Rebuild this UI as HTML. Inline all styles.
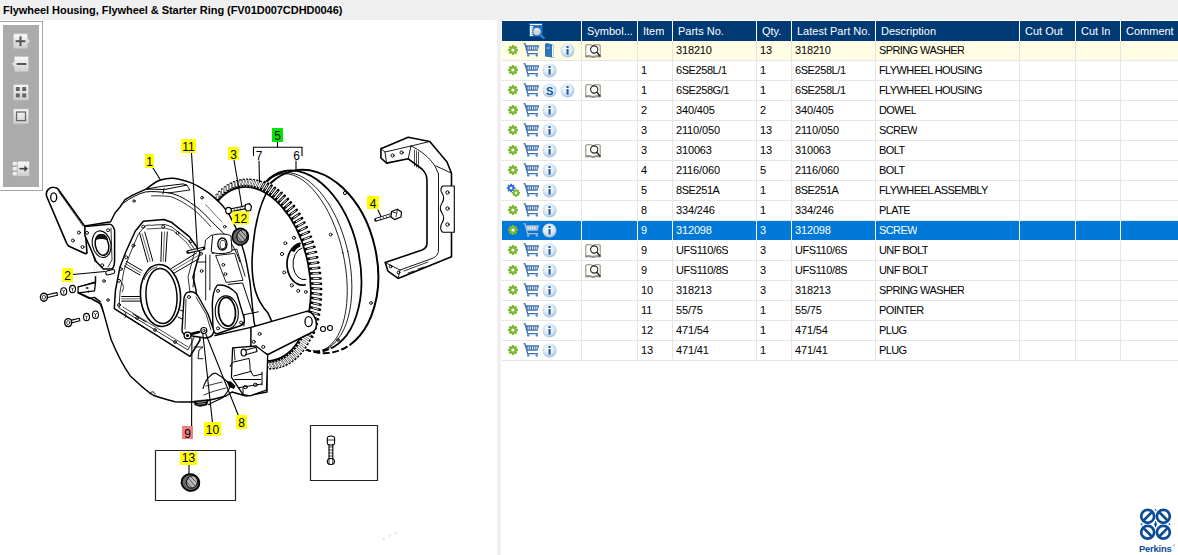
<!DOCTYPE html>
<html><head><meta charset="utf-8"><style>*{margin:0;padding:0;box-sizing:border-box}
html,body{width:1178px;height:555px;overflow:hidden;background:#f0f0f0;font-family:"Liberation Sans",sans-serif;}
#title{position:absolute;left:0;top:0;width:1178px;height:20px;font-weight:bold;font-size:11px;line-height:20px;padding-left:3px;color:#000;letter-spacing:-0.05px}
#left{position:absolute;left:0;top:20px;width:497px;height:535px;background:#fff;overflow:hidden}
#diag{position:absolute;left:0;top:-20px}
#right{position:absolute;left:501px;top:20px;width:677px;height:535px;background:#fff;overflow:hidden}
#tb{position:absolute;left:0;top:1px;width:43px;height:170px;border:1px solid #a8a8a8;border-left:none;background:#fff}
#tbi{position:absolute;left:3px;top:3px;width:36px;height:162px;background:#ababab}
.row{position:absolute;left:1px;width:677px;height:20px;font-size:11px;white-space:nowrap;color:#000}
.row div{position:absolute;top:0;height:19px;line-height:19px;overflow:hidden}
.hdr{background:#003a75;color:#fff}
.hdr div{height:20px;line-height:20px}
.sep{position:absolute;top:0;width:1px;height:20px;background:#e6e6e6}
.hdr .sep{background:#fff}
.sel{background:#0078d7;color:#fff}
.sel .sep{background:#fff}
.yel{background:#fffde4}
.hl{position:absolute;left:0;height:1px;width:677px;background:#e6e6e6}
.sel .hl{background:#fff}
.c{letter-spacing:-0.6px}
.p{letter-spacing:-0.42px}
.d{letter-spacing:-0.15px}
.ic{position:absolute;overflow:visible}
</style></head><body>
<svg width="0" height="0" style="position:absolute">
<defs>
<radialGradient id="gInfo" cx="0.45" cy="0.4" r="0.6">
 <stop offset="0" stop-color="#fbfdff"/><stop offset="0.6" stop-color="#dce9f5"/><stop offset="1" stop-color="#9fc0e2"/>
</radialGradient>
<linearGradient id="gBtn" x1="0" y1="0" x2="0" y2="1">
 <stop offset="0" stop-color="#fbfbfb"/><stop offset="1" stop-color="#cfcfcf"/>
</linearGradient>
<symbol id="i-gear" viewBox="0 0 10 10">
 <g fill="#7cb832">
  <circle cx="5" cy="5" r="3.7"/>
  <rect x="3.9" y="0" width="2.2" height="10"/>
  <rect x="0" y="3.9" width="10" height="2.2"/>
  <rect x="3.9" y="0" width="2.2" height="10" transform="rotate(45 5 5)"/>
  <rect x="3.9" y="0" width="2.2" height="10" transform="rotate(-45 5 5)"/>
 </g>
 <circle cx="5" cy="5" r="1.6" fill="#fff"/>
</symbol>
<symbol id="i-gears" viewBox="0 0 16 16">
 <g fill="#2f6fe0" transform="translate(0.8 0.8) scale(0.85)">
  <circle cx="5" cy="5" r="3.7"/>
  <rect x="3.9" y="0" width="2.2" height="10"/><rect x="0" y="3.9" width="10" height="2.2"/>
  <rect x="3.9" y="0" width="2.2" height="10" transform="rotate(45 5 5)"/><rect x="3.9" y="0" width="2.2" height="10" transform="rotate(-45 5 5)"/>
  <circle cx="5" cy="5" r="1.6" fill="#fff"/>
 </g>
 <g fill="#7cb832" transform="translate(6 5.9) scale(0.8)">
  <circle cx="5" cy="5" r="3.7"/>
  <rect x="3.9" y="0" width="2.2" height="10"/><rect x="0" y="3.9" width="10" height="2.2"/>
  <rect x="3.9" y="0" width="2.2" height="10" transform="rotate(45 5 5)"/><rect x="3.9" y="0" width="2.2" height="10" transform="rotate(-45 5 5)"/>
  <circle cx="5" cy="5" r="1.6" fill="#fff"/>
 </g>
</symbol>
<symbol id="i-cart" viewBox="0 0 17 14">
 <g fill="none" stroke="#3e6fa8" stroke-width="1.3">
  <path d="M0.6 0.6 L2 0.9 L4.6 10.6 L15 10.6"/>
 </g>
 <path d="M2.6 2.2 L16.2 2.2 L14.6 7.8 L4 7.8 Z" fill="#3e6fa8"/>
 <g fill="#dfe8f3"><rect x="4.6" y="3.5" width="1.2" height="3"/><rect x="6.8" y="3.5" width="1.2" height="3"/><rect x="9" y="3.5" width="1.2" height="3"/><rect x="11.2" y="3.5" width="1.2" height="3"/><rect x="13.3" y="3.5" width="1.1" height="3"/></g>
 <circle cx="5.2" cy="12.4" r="1.2" fill="#3b86d8"/><circle cx="13.8" cy="12.4" r="1.2" fill="#3b86d8"/>
</symbol>
<symbol id="i-carts" viewBox="0 0 17 14">
 <g fill="none" stroke="#a9bdd8" stroke-width="1.3">
  <path d="M0.6 0.6 L2 0.9 L4.6 10.6 L15 10.6"/>
 </g>
 <path d="M2.6 2.2 L16.2 2.2 L14.6 7.8 L4 7.8 Z" fill="#a9bdd8"/>
 <g fill="#e8eef6"><rect x="4.6" y="3.5" width="1.2" height="3"/><rect x="6.8" y="3.5" width="1.2" height="3"/><rect x="9" y="3.5" width="1.2" height="3"/><rect x="11.2" y="3.5" width="1.2" height="3"/></g>
 <circle cx="5.2" cy="12.4" r="1.2" fill="#a9bdd8"/><circle cx="13.8" cy="12.4" r="1.2" fill="#a9bdd8"/>
</symbol>
<symbol id="i-info" viewBox="0 0 15 15">
 <circle cx="7.5" cy="7.5" r="7" fill="url(#gInfo)"/>
 <rect x="6.5" y="6" width="2.1" height="5.6" fill="#2c5b99"/>
 <rect x="6.5" y="3" width="2.1" height="2" fill="#2c5b99"/>
</symbol>
<symbol id="i-s" viewBox="0 0 15 15">
 <circle cx="7.5" cy="7.5" r="7" fill="url(#gInfo)"/>
 <text x="7.6" y="11.6" text-anchor="middle" font-family="Liberation Sans" font-weight="bold" font-size="11" fill="#155a9c">S</text>
</symbol>
<symbol id="i-book" viewBox="0 0 11 17">
 <path d="M1 2.5 Q1 0.8 3 1 L8 2.2 L9.8 3.2 L9.8 16 L8 15.6 L1 14.5 Z" fill="#2f74b8"/>
 <path d="M8 3 L9.6 3.6 L9.6 15.4 L8 15 Z" fill="#fff"/>
 <ellipse cx="4.3" cy="6" rx="1.6" ry="1" fill="#7fb0e0"/>
</symbol>
<symbol id="i-sym" viewBox="0 0 17 15">
 <path d="M0.8 2 L0.8 13 Q4 12 8 13.4 Q12 12 15.2 13 L15.2 2 Q12 1 8 2.4 Q4 1 0.8 2 Z" fill="#fff" stroke="#8a8a6a" stroke-width="1"/>
 <path d="M0.8 13 L0.8 14 Q4 13 8 14.4 Q12 13 15.2 14" fill="none" stroke="#555" stroke-width="0.8"/>
 <circle cx="9.2" cy="6.5" r="3.6" fill="none" stroke="#222" stroke-width="1.1"/>
 <path d="M11.6 9 L15.5 13.6" stroke="#222" stroke-width="1.4"/>
</symbol>
<symbol id="i-hdr" viewBox="0 0 17 17">
 <rect x="0" y="0" width="13.6" height="13.6" fill="#1a6cc0"/>
 <rect x="1" y="1" width="12" height="1.1" fill="#fff"/>
 <rect x="1" y="3" width="3.2" height="10" fill="#fff"/>
 <g fill="#1a6cc0"><rect x="2.6" y="4.3" width="1.6" height="0.9"/><rect x="2.6" y="6.5" width="1.6" height="0.9"/><rect x="2.6" y="8.7" width="1.6" height="0.9"/><rect x="2.6" y="10.9" width="1.6" height="0.9"/></g>
 <circle cx="7.9" cy="8.5" r="4.3" fill="#d2d4d8" stroke="#2070c0" stroke-width="0.9"/>
 <path d="M6,6.5 Q8,5.5 10,7" stroke="#f4f4f4" stroke-width="1" fill="none"/>
 <path d="M11,12 L15.5,15.5" stroke="#3a86d0" stroke-width="2"/>
</symbol>
<symbol id="i-tools" viewBox="0 0 44 170">
 <g>
  <rect x="13.5" y="11.8" width="14" height="14.5" rx="1" fill="url(#gBtn)" stroke="#c4c4c4" stroke-width="0.8"/>
  <path d="M27.5 16 L29.8 19 L27.5 22 Z" fill="#e8e8e8"/>
  <rect x="15.6" y="18.2" width="9.8" height="2" fill="#555"/><rect x="19.5" y="14.3" width="2" height="9.8" fill="#555"/>
  <rect x="14.5" y="34.5" width="14" height="15" rx="1" fill="url(#gBtn)" stroke="#c4c4c4" stroke-width="0.8"/>
  <path d="M14.5 39 L12.2 42 L14.5 45 Z" fill="#e8e8e8"/>
  <rect x="16.6" y="41" width="9.8" height="2" fill="#555"/>
  <rect x="13.5" y="62.7" width="15" height="15.3" rx="1" fill="url(#gBtn)" stroke="#c4c4c4" stroke-width="0.8"/>
  <rect x="15.8" y="65" width="4" height="4" fill="#666"/><rect x="22.2" y="65" width="4" height="4" fill="#666"/>
  <rect x="15.8" y="71.4" width="4" height="4" fill="#666"/><rect x="22.2" y="71.4" width="4" height="4" fill="#666"/>
  <rect x="13.5" y="87" width="15" height="14.7" rx="1" fill="url(#gBtn)" stroke="#c4c4c4" stroke-width="0.8"/>
  <rect x="16.5" y="90" width="9" height="8.6" fill="none" stroke="#666" stroke-width="1.3"/>
  <rect x="12.2" y="139.3" width="5" height="4.6" fill="#eee" stroke="#999" stroke-width="0.6"/>
  <rect x="12.2" y="144.3" width="5" height="4.6" fill="#eee" stroke="#999" stroke-width="0.6"/>
  <rect x="12.2" y="149.3" width="5" height="4.6" fill="#eee" stroke="#999" stroke-width="0.6"/>
  <rect x="17.6" y="139.6" width="11.6" height="14.4" fill="url(#gBtn)"/>
  <path d="M19.5 146.7 L26 146.7" stroke="#444" stroke-width="1.6"/><path d="M24.4 143.6 L28 146.7 L24.4 149.8 Z" fill="#444"/>
 </g>
</symbol>
<symbol id="i-logo" viewBox="0 0 40 50">
 <g fill="none" stroke="#0c4c98" stroke-width="2.8">
  <circle cx="10.5" cy="10.5" r="6.6"/><circle cx="26.5" cy="10.5" r="6.6"/>
  <circle cx="10.5" cy="26.8" r="6.6"/><circle cx="26.5" cy="26.8" r="6.6"/>
  <path d="M6 15 L15 6"/><path d="M22 6 L31 15"/><path d="M6 22.3 L15 31.3"/><path d="M22 31.3 L31 22.3"/>
 </g>
 <path d="M18.5 15 L20 18.6 L18.5 22.3 L17 18.6 Z M18.5 2.5 L19.6 4.5 L17.4 4.5 Z M3 18.6 L5 17.4 L5 19.8Z M34 18.6 L32 17.4 L32 19.8 Z" fill="#0c4c98"/>
 <text x="1.6" y="46.8" font-family="Liberation Sans" font-weight="bold" font-size="9.6" fill="#0c4c98" letter-spacing="-0.2">Perkins</text>
 <text x="36" y="42" font-family="Liberation Sans" font-size="3" fill="#0c4c98">®</text>
</symbol>
</defs>
</svg>

<div id="title">Flywheel Housing, Flywheel &amp; Starter Ring (FV01D007CDHD0046)</div>
<div id="left">
<svg id="diag" width="497" height="555" viewBox="0 0 497 555">
<g fill="none" stroke="#000" stroke-linejoin="round" stroke-linecap="round">
<!-- ===== FLYWHEEL (behind) ===== -->
<ellipse cx="313.3" cy="261.5" rx="63.2" ry="92.9" transform="rotate(-12.7 313.3 261.5)" stroke-width="2"/>
<ellipse cx="304" cy="261" rx="55" ry="92" transform="rotate(-12.7 304 261)" stroke-width="1.8"/>
<ellipse cx="301" cy="262" rx="48" ry="91" transform="rotate(-12.7 301 262)" stroke-width="0.8"/>
<ellipse cx="300" cy="262.5" rx="44" ry="90.5" transform="rotate(-12.7 300 262.5)" stroke-width="0.8"/>
<circle cx="345" cy="193" r="1.6" stroke-width="1"/><circle cx="371" cy="303" r="1.4" stroke-width="0.9"/><circle cx="338" cy="340" r="1.3" stroke-width="0.9"/>
<path stroke="#fff" stroke-width="9" stroke-dasharray="2.5 7" stroke-linecap="butt" d="M350,346 Q328,357 300,354"/>
<!-- ===== RING GEAR ===== -->
<ellipse cx="259" cy="274" rx="61.5" ry="97.5" transform="rotate(-11 259 274)" fill="#fff" stroke="none"/>
<path stroke-width="2.5" stroke-linecap="round" d="M308.5,263.8 L318.4,262.5 M309.4,268.7 L319.3,267.8 M310.1,273.6 L320.1,273.1 M310.6,278.5 L320.6,278.5 M311.0,283.4 L321.0,283.8 M311.1,288.2 L321.2,289.1 M311.1,293.1 L321.1,294.4 M311.0,297.8 L320.9,299.6 M310.6,302.5 L320.5,304.7 M310.1,307.1 L319.9,309.7 M309.5,311.6 L319.1,314.6 M308.6,315.9 L318.1,319.4 M307.6,320.2 L316.9,324.0 M306.4,324.3 L315.6,328.5 M305.1,328.2 L314.0,332.8 M303.6,332.0 L312.3,336.9 M220.5,328.9 L218.5,334.2 M218.2,325.0 L215.9,329.9 M216.0,320.9 L213.5,325.5 M213.9,316.7 L211.2,320.9 M212.0,312.3 L209.0,316.2 M210.2,307.9 L207.0,311.3 M208.6,303.3 L205.2,306.3 M207.1,298.6 L203.5,301.2 M205.7,293.9 L202.0,296.1 M204.5,289.1 L200.7,290.8 M203.5,284.2 L199.6,285.5 M202.6,279.3 L198.7,280.2 M201.9,274.4 L197.9,274.9 M201.4,269.5 L197.4,269.5 M201.0,264.6 L197.0,264.2 M200.9,259.8 L196.8,258.9 M200.9,254.9 L196.9,253.6 M201.0,250.2 L197.1,248.4 M201.4,245.5 L197.5,243.3 M201.9,240.9 L198.1,238.3 M202.5,236.4 L198.9,233.4 M260.5,189.8 L264.7,182.1 M263.6,191.3 L268.2,183.6 M266.6,193.0 L271.6,185.5 M269.6,195.0 L275.0,187.7 M272.6,197.2 L278.3,190.1 M275.5,199.7 L281.6,192.7 M278.4,202.4 L284.8,195.7 M281.2,205.4 L288.0,198.9 M283.9,208.5 L291.0,202.3 M286.5,211.9 L294.0,205.9 M289.1,215.4 L296.8,209.8 M291.5,219.1 L299.5,213.8 M293.8,223.0 L302.1,218.1 M296.0,227.1 L304.5,222.5 M298.1,231.3 L306.8,227.1 M300.0,235.7 L309.0,231.8 M301.8,240.1 L311.0,236.7 M303.4,244.7 L312.8,241.7 M304.9,249.4 L314.5,246.8 M306.3,254.1 L316.0,251.9 M307.5,258.9 L317.3,257.2"/><path stroke="#fff" stroke-width="1" d="M311.5,263.4 L316.6,262.7 M312.4,268.4 L317.5,267.9 M313.1,273.4 L318.3,273.2 M313.6,278.5 L318.8,278.5 M314.0,283.5 L319.2,283.7 M314.1,288.5 L319.4,289.0 M314.1,293.5 L319.3,294.2 M314.0,298.3 L319.1,299.3 M313.6,303.2 L318.7,304.3 M313.1,307.9 L318.1,309.2 M312.3,312.5 L317.3,314.1 M311.4,317.0 L316.4,318.8 M310.4,321.3 L315.2,323.3 M309.2,325.5 L313.9,327.8 M307.8,329.6 L312.4,332.0 M306.2,333.5 L310.7,336.0 M219.9,330.5 L218.9,333.2 M217.5,326.4 L216.3,329.0 M215.3,322.3 L213.9,324.7 M213.1,317.9 L211.7,320.2 M211.1,313.5 L209.6,315.5 M209.3,308.9 L207.6,310.7 M207.5,304.2 L205.8,305.8 M206.0,299.4 L204.2,300.8 M204.6,294.5 L202.7,295.7 M203.4,289.6 L201.4,290.5 M202.3,284.6 L200.3,285.3 M201.4,279.6 L199.4,280.1 M200.7,274.6 L198.6,274.8 M200.2,269.5 L198.1,269.5 M199.8,264.5 L197.7,264.3 M199.7,259.5 L197.6,259.0 M199.7,254.5 L197.6,253.8 M199.8,249.7 L197.8,248.7 M200.2,244.8 L198.2,243.7 M200.7,240.1 L198.8,238.8 M201.5,235.5 L199.6,233.9 M261.8,187.5 L264.0,183.5 M265.0,189.0 L267.3,185.0 M268.1,190.8 L270.7,186.9 M271.3,192.8 L274.0,189.0 M274.3,195.1 L277.3,191.4 M277.4,197.6 L280.5,194.0 M280.3,200.4 L283.7,196.9 M283.2,203.4 L286.8,200.0 M286.0,206.6 L289.7,203.4 M288.8,210.1 L292.6,207.0 M291.4,213.7 L295.4,210.8 M293.9,217.5 L298.0,214.8 M296.3,221.6 L300.6,219.0 M298.5,225.7 L303.0,223.3 M300.7,230.1 L305.2,227.8 M302.7,234.5 L307.4,232.5 M304.5,239.1 L309.3,237.3 M306.3,243.8 L311.1,242.2 M307.8,248.6 L312.8,247.2 M309.2,253.5 L314.2,252.3 M310.4,258.4 L315.5,257.5"/><path stroke-width="2.3" stroke-linecap="butt" d="M301.9,335.6 L310.4,340.9 M300.2,338.9 L308.4,344.6 M298.2,342.1 L306.2,348.1 M296.2,345.1 L303.8,351.3 M294.0,347.8 L301.4,354.3 M291.7,350.4 L298.7,357.1 M289.3,352.6 L296.0,359.6 M286.8,354.7 L293.1,361.8 M284.1,356.4 L290.2,363.8 M281.4,357.9 L287.1,365.5 M278.7,359.2 L283.9,366.8 M275.8,360.2 L280.7,367.9 M272.9,360.9 L277.4,368.7 M269.9,361.3 L274.1,369.2 M266.9,361.5 L270.6,369.4 M263.9,361.4 L267.2,369.3 M260.8,361.0 L263.7,368.9 M257.7,360.3 L260.3,368.2 M254.6,359.4 L256.8,367.2 M251.5,358.2 L253.3,365.9 M248.4,356.7 L249.8,364.4 M245.4,355.0 L246.4,362.5 M242.4,353.0 L243.0,360.3 M239.4,350.8 L239.7,357.9 M236.5,348.3 L236.4,355.3 M233.6,345.6 L233.2,352.3 M230.8,342.6 L230.0,349.1 M228.1,339.5 L227.0,345.7 M225.5,336.1 L224.0,342.1 M222.9,332.6 L221.2,338.2 M203.4,232.1 L199.9,228.6 M204.4,227.8 L201.1,224.0 M205.6,223.7 L202.4,219.5 M206.9,219.8 L204.0,215.2 M208.4,216.0 L205.7,211.1 M210.1,212.4 L207.6,207.1 M211.8,209.1 L209.6,203.4 M213.8,205.9 L211.8,199.9 M215.8,202.9 L214.2,196.7 M218.0,200.2 L216.6,193.7 M220.3,197.6 L219.3,190.9 M222.7,195.4 L222.0,188.4 M225.2,193.3 L224.9,186.2 M227.9,191.6 L227.8,184.2 M230.6,190.1 L230.9,182.5 M233.3,188.8 L234.1,181.2 M236.2,187.8 L237.3,180.1 M239.1,187.1 L240.6,179.3 M242.1,186.7 L243.9,178.8 M245.1,186.5 L247.4,178.6 M248.1,186.6 L250.8,178.7 M251.2,187.0 L254.3,179.1 M254.3,187.7 L257.7,179.8 M257.4,188.6 L261.2,180.8"/><path stroke="#fff" stroke-width="1.5" stroke-linecap="butt" d="M303.6,336.6 L309.2,340.1 M301.8,340.1 L307.2,343.7 M299.8,343.3 L305.0,347.2 M297.7,346.3 L302.7,350.4 M295.5,349.1 L300.3,353.4 M293.1,351.7 L297.7,356.1 M290.6,354.0 L295.0,358.6 M288.0,356.1 L292.2,360.8 M285.4,357.9 L289.3,362.7 M282.6,359.4 L286.3,364.3 M279.7,360.7 L283.2,365.7 M276.8,361.7 L280.0,366.8 M273.8,362.4 L276.7,367.5 M270.7,362.9 L273.4,368.0 M267.6,363.1 L270.1,368.2 M264.5,362.9 L266.7,368.1 M261.4,362.6 L263.3,367.7 M258.2,361.9 L259.9,367.0 M255.0,360.9 L256.4,366.0 M251.9,359.7 L253.0,364.8 M248.7,358.2 L249.6,363.2 M245.6,356.5 L246.2,361.4 M242.5,354.5 L242.9,359.2 M239.4,352.2 L239.6,356.9 M236.4,349.7 L236.4,354.2 M233.5,346.9 L233.2,351.3 M230.6,343.9 L230.1,348.2 M227.9,340.7 L227.2,344.8 M225.2,337.3 L224.3,341.2 M222.6,333.7 L221.5,337.4 M202.7,231.4 L200.4,229.1 M203.7,227.0 L201.6,224.5 M205.0,222.9 L202.9,220.1 M206.3,218.9 L204.4,215.9 M207.9,215.0 L206.1,211.8 M209.6,211.4 L207.9,207.9 M211.4,207.9 L209.9,204.3 M213.4,204.7 L212.1,200.8 M215.5,201.7 L214.4,197.6 M217.7,198.9 L216.8,194.6 M220.1,196.3 L219.4,191.9 M222.6,194.0 L222.1,189.4 M225.2,191.9 L224.9,187.2 M227.8,190.1 L227.8,185.3 M230.6,188.6 L230.8,183.7 M233.5,187.3 L233.9,182.3 M236.4,186.3 L237.1,181.2 M239.4,185.6 L240.4,180.5 M242.5,185.1 L243.7,180.0 M245.6,184.9 L247.0,179.8 M248.7,185.1 L250.4,179.9 M251.8,185.4 L253.8,180.3 M255.0,186.1 L257.2,181.0 M258.2,187.1 L260.7,182.0"/>
<ellipse cx="256" cy="274" rx="53" ry="88" transform="rotate(-11 256 274)" stroke-width="1.7" fill="#fff"/>
<!-- face -->
<path stroke-width="1.6" d="M265.8,194 C258,210 253,235 252,262 C252,285 256,300 268,313 L272,322"/>
<path stroke-width="1.7" d="M300,243.3 A15.5,21 0 0 0 305,284.8"/>
<path stroke-width="1" d="M302,248 A11,16 0 0 0 306,279.5"/>
<path fill="#000" stroke="none" d="M291.5,251 C293.5,246.5 296.5,244 300,243.3 L300.5,246.5 C297.5,247.5 295.5,249.5 294.5,252 Z"/>
<g stroke-width="0.9">
 <circle cx="293.9" cy="237.8" r="1.5"/><circle cx="285.3" cy="243.2" r="1.5"/><circle cx="282" cy="254" r="1.6"/><circle cx="284.2" cy="272.4" r="1.5"/>
 <circle cx="291.8" cy="285.4" r="1.6"/><circle cx="298.2" cy="290.8" r="1.5"/><circle cx="305.8" cy="291.9" r="1.4"/><circle cx="330.7" cy="234.6" r="1.4"/>
</g>
<!-- ===== HOUSING ===== -->
<!-- main silhouette -->
<path fill="#fff" stroke-width="1.45" d="M84.7,226 L106.3,222.5 L110.6,221.8 L115,213 L120,207 L125,199.6 L132.6,195.2 L146.5,188.9 C150,186 155,182 160.4,180 C165,178.5 169,178 173,178.2 C180,179 186,181 190.6,182.6 C197,185 203,189 208.3,192.7 C214,197 219,202 223.4,206.6 C227,211 231,217 233.5,223 C237,230 240,238 242.6,247.6 C245,255 246,260 246.9,264.8 L250,282 L254,322 L262,352 L267,355 L267,392 L246,396 L232,392 L226,396 C215,399 205,402 196.6,401.7 C190,402 182,402 175,401.7 C165,399 158,397 153.3,395.2 C147,392 140,385 130.1,375.7 C124,367 118,356 111.3,340 C107,326 104,313 101,304 L92,299 L79,293 L80,287 L95.5,282 L95.5,262 L89,240.5 Z"/>
<path stroke-width="1" d="M150,394 C151,391 154,391 155,394"/>
<path stroke="#fff" stroke-width="2.4" d="M95.5,263 L95.5,275"/>
<!-- arm -->
<path fill="#fff" stroke-width="1.6" d="M53.7,187.2 C49,187 45.5,191 46.5,196 L66.7,243.4 L68.5,246 L85.5,253.8 L87,253 L84.9,226.4 L58,189 C57,188 55.5,187.2 53.7,187.2 Z"/>
<path stroke-width="0.8" d="M59,192 L83,226"/>
<ellipse cx="53.7" cy="197.3" rx="3" ry="4.5" stroke-width="1.3"/>
<g stroke-width="0.9"><circle cx="78.9" cy="232.6" r="1.5"/><circle cx="72.9" cy="240.5" r="1.5"/><circle cx="82.5" cy="247" r="1.5"/></g>
<!-- ear flange -->
<path fill="#fff" stroke-width="1.5" d="M84.9,226.4 L109.2,224.2 C111,224 113,225 114.6,230.2 L114.6,260.5 C114.6,265 113,269 111.4,269.1 L103.3,269.1 L96.2,261.5 L84.9,235.6 Z"/>
<path stroke-width="0.8" d="M111,228 L112,260 L108,267"/>
<ellipse cx="101.6" cy="244.2" rx="9.2" ry="13.5" transform="rotate(-12 101.6 244.2)" stroke-width="1.1"/>
<ellipse cx="102" cy="245" rx="6.6" ry="10.5" transform="rotate(-12 102 245)" stroke-width="1.5"/>
<path fill="#111" stroke="none" d="M95.8,240 C97,235 101,233.5 104.5,234.5 C107,236 108,238 108.2,240.5 C104,238.5 99,238.5 95.8,240 Z"/>
<g stroke-width="0.9"><circle cx="87" cy="232.9" r="1.5"/><circle cx="108.1" cy="230.2" r="1.5"/><circle cx="102.2" cy="265.3" r="1.5"/></g>
<!-- top rims -->
<path stroke-width="1" d="M123.8,202.8 C130,198 138,194 145.2,192 C152,191 160,192 168,192.7 C176,194 184,198 190.6,202.8 C197,207 203,212 208.3,218 C213,223 218,228 223.4,233 C230,240 236,250 240,262"/>
<path stroke-width="0.8" d="M151.5,195.9 C158,195.5 164,196 170.4,196.5 C178,199 186,204 193.1,209.1 C199,214 205,220 210.8,226.7"/>
<path stroke-width="1" d="M146.5,189 L161.6,186.4 L183,183.9 L186.8,185.1 L165,189.5 Z"/>
<path stroke-width="0.9" d="M164.1,188.3 L162.9,194 M186.8,185.1 L190,190 L168,193"/>
<g stroke-width="0.9"><circle cx="202" cy="197.7" r="1.3"/><circle cx="224.7" cy="226.7" r="1.3"/><circle cx="134" cy="201" r="1.2"/></g>
<path stroke-width="0.7" stroke-dasharray="1.2 1.2" d="M206,205 L222,222"/>
<!-- front plate -->
<path fill="#fff" stroke-width="1.5" d="M143.3,221.3 L164,219.5 L171.3,222.2 L189.3,236.6 L196.5,246.5 L200,252.8 L197,262 L193,277 L196,290 L200,340 L190,356.3 L114.3,308.7 L115.4,290.7 L119.9,267.3 L126.2,251 L135.2,231.2 Z"/>
<path stroke-width="0.8" d="M145,226 C148,224 150,226 155,225 L165,224.5 L172,227 L188,240 L195,250 L192,262 L188,277 L190,292 L194,338 L188,350 L119,308 L120,292 L124,270 L130,254 L138,235 Z"/>
<!-- bosses -->
<g stroke-width="0.9">
 <circle cx="143.3" cy="226.7" r="1.5"/><circle cx="163.2" cy="226.7" r="1.5"/><circle cx="177.6" cy="233" r="1.5"/><circle cx="191" cy="241.1" r="1.5"/><circle cx="201" cy="253.7" r="1.5"/>
 <circle cx="133.4" cy="245.6" r="1.5"/><circle cx="126.2" cy="257.3" r="1.5"/><circle cx="120.8" cy="269" r="1.5"/><circle cx="119" cy="280.8" r="1.5"/><circle cx="119" cy="305" r="1.5"/>
 <circle cx="137" cy="318" r="1.4"/><circle cx="155" cy="330" r="1.4"/><circle cx="175" cy="342" r="1.4"/>
</g>
<!-- spokes -->
<g stroke-width="1">
 <path d="M139.6,233 L147.7,262 M144.8,232.1 L152.8,261"/>
 <path d="M161.8,232.1 L160.9,261.5 M167.3,232 L165.5,261.5"/>
 <path d="M171.3,268.5 L196.5,253 M174,273.2 L198.8,258.7"/>
 <path d="M124.4,266 L140,275 M126.2,261.3 L142,270.5"/>
 <path d="M121.7,296.5 L140.2,296.5 M121.7,301.1 L140.5,301.1"/>
 <path d="M133,314 L146,322 M130,318.5 L143.5,327"/>
 <path d="M180,310 L193,315 M178,317 L192,324"/>
</g>
<g stroke-width="0.6">
 <path d="M142.2,234 L150.2,261.5"/>
 <path d="M164.5,232 L163.2,261.5"/>
 <path d="M172.6,270.8 L197.6,255.8"/>
 <path d="M125.3,263.6 L141,272.7"/>
 <path d="M121.7,298.8 L140.3,298.8"/>
</g>
<path stroke-width="0.7" d="M147,229 L165,228 L173,230.5 L186,242 L192,250"/>
<path stroke-width="0.7" d="M123,307 L188,347"/>
<g stroke-width="0.8"><path d="M122,283 C124,286 124,289 122,292 M123,310 C126,312 127,316 125,318"/></g>
<!-- big hole -->
<ellipse cx="160.5" cy="295.5" rx="20" ry="31" transform="rotate(-4 160.5 295.5)" stroke-width="1.6" fill="#fff"/>
<ellipse cx="161.5" cy="296" rx="15.5" ry="27.5" transform="rotate(-4 161.5 296)" stroke-width="1.5"/>
<path stroke-width="0.8" d="M144,280 C147,272 152,268 157,267"/>
<!-- right web -->
<g stroke-width="0.9">
 <path d="M212,234.7 L205.5,240 L204.7,247.2"/>
 <path d="M212,253.4 L236.8,249.2 L245.1,276.2"/>
 <path d="M216,255.5 L234.7,253.4 L243,280.3 L226.5,282.4 Z"/>
 <path d="M205.7,255 L205.7,300 M209.9,255 L209.9,290"/>
 <path d="M197,262 L205.7,262"/>
 <path d="M194.7,274.5 L192.9,287"/>
</g>
<path fill="#fff" stroke-width="1" d="M213,235 C217,233.5 228,233.5 231,236 L232,251 C229,254 215,254.5 211.5,252 Z"/>
<g stroke-width="0.9"><circle cx="223.3" cy="264.8" r="1.4"/><circle cx="225.4" cy="274.1" r="1.4"/><circle cx="201.6" cy="271" r="1.4"/><circle cx="218.2" cy="289.7" r="1.3"/></g>
<ellipse cx="222.4" cy="244" rx="4.6" ry="6" stroke-width="1.3"/>
<ellipse cx="222.8" cy="244.5" rx="2.8" ry="4.2" stroke-width="0.8"/>
<!-- starter flange -->
<path stroke-width="1" d="M228.1,284.4 L242.6,283 L252.6,313.2 M244,314.7 L258.4,311.8 M244,314.7 L244,326"/>
<path fill="#fff" stroke-width="1.4" d="M217.3,285.1 C222,284.5 230,286 236.8,293.8 L244,317.6 C245,321 244,324 241,325.5 L218,333.5 C215,334 213,332 213,329 L212.3,304.6 C212.5,296 214,289 217.3,285.1 Z"/>
<ellipse cx="226.8" cy="312.3" rx="11.5" ry="16.5" transform="rotate(-6 226.8 312.3)" stroke-width="1.1"/>
<ellipse cx="227" cy="311.8" rx="8.5" ry="14.4" transform="rotate(-6 227 311.8)" stroke-width="1.7"/>
<g stroke-width="0.9"><circle cx="218" cy="290.9" r="1.5"/><circle cx="241.1" cy="322.6" r="1.5"/><circle cx="218" cy="328.4" r="1.5"/></g>
<!-- pointer 11 -->
<path stroke-width="3.4" d="M188,252 L203.7,248.3"/>
<path stroke-width="1.4" stroke="#fff" d="M189,251.6 L202.5,248.6"/>
<!-- plug 12 -->
<ellipse cx="240.4" cy="236.7" rx="8" ry="8.3" fill="#666" stroke-width="1.6" transform="rotate(20 240.4 236.7)"/>
<ellipse cx="242" cy="236" rx="5" ry="6.3" fill="#aaa" stroke-width="0.9" transform="rotate(20 242 236)"/>
<path stroke="#222" stroke-width="0.7" d="M238,232 L245,240 M240,230 L246,236 M237,236 L242,242"/>
<!-- lever arm -->
<path fill="#fff" stroke-width="1.5" d="M250.9,327.4 L305.7,311.6 C312,310 316.5,318 316.5,325 C316,330 313,332 311.5,332.5 L268,354.5 L250.9,346.9 Z"/>
<path stroke-width="1.3" d="M215,335.5 L250.9,327.4"/>
<ellipse cx="308.6" cy="321.7" rx="3.6" ry="5" stroke-width="1.3"/>
<g stroke-width="0.9"><circle cx="259.6" cy="333.9" r="1.5"/><circle cx="253.8" cy="341.8" r="1.5"/><circle cx="263.2" cy="346.9" r="1.5"/></g>
<!-- foot -->
<path fill="#fff" stroke-width="1.3" d="M232.6,347.9 L256,346 L267.7,354.9 L266.5,390 L250.1,395.9 L243.1,394.7 L238.4,387.7 L231.4,377.2 Z"/>
<path stroke-width="1" d="M230.2,366.6 C231,364 232,362.5 233.7,362 L249,358.4 C250,362 250,366 250.1,370.1 C251,372 252,374 253.6,376 L262,374 L262,372"/>
<path stroke-width="1" d="M233.7,376 L251.3,371.3 M234.9,379.5 L260.7,379.5 M238.4,387.7 L262,384 M243.1,394.7 L243,388 M262,374 L262,385"/>
<path stroke-width="0.9" d="M234,348 L235,360"/>
<g stroke-width="1"><ellipse cx="245.4" cy="387.1" rx="2" ry="1.6"/><ellipse cx="255.4" cy="384.8" rx="2" ry="1.6"/></g>
<path fill="#fff" stroke-width="1.1" d="M244.5,350.5 L256,347.3 L257,351.5 L245.5,354.7 Z"/>
<ellipse cx="243.7" cy="352.6" rx="2.6" ry="3.4" fill="#fff" stroke-width="1.2"/>
<path stroke-width="0.9" d="M194,347 L203,347 L199,350 L198,358.7 L203,358.7"/>
<!-- sump -->
<path stroke-width="1.1" d="M203,388.5 C205,382 208,377 210.3,375.9 C212,374 214,373 215.7,373.2 C219,375 222,377 224.7,379.5 C228,382 231,385 233.7,387.6"/>
<path stroke-width="1.1" d="M208.5,404.7 C213,402 219,400 222.9,397.5 C226,394 229,390 230,386.7"/>
<path stroke-width="0.8" d="M204,395 C210,392 218,390 226,388 M206,386 L222,382"/>
<path fill="#000" stroke="none" d="M226.5,381 L231,381.5 L235.5,386 L234,389 L229,387 Z"/>
<path fill="#000" stroke-width="0.5" d="M194,401 L208.5,399.5 L207,405 L200,406.5 L195,405 Z"/>
<path stroke="#fff" stroke-width="0.6" d="M197,402.5 L206,401.5 M198,404.3 L205,403.5"/>
<!-- plate 8 -->
<path fill="#fff" stroke-width="1.4" d="M189,292 C193,291 196,293 198,296 L208,314 L214,331 C213,336 209,338 205,338 L186,335 C183,334 182,332 182,330 L184,298 C185,294 187,292 189,292 Z"/>
<path stroke-width="0.8" d="M186,299 L185,329 M196,297 L206,314 L211,330"/>
<circle cx="189" cy="297" r="1.5" stroke-width="0.9"/>
<!-- bolt 9 & washer 10 -->
<path stroke-width="2.4" d="M191,334 L199,332"/>
<circle cx="187.5" cy="335.5" r="3.4" stroke-width="1.3" fill="#fff"/>
<circle cx="187.5" cy="335.5" r="1.6" fill="#000" stroke="none"/>
<circle cx="203.8" cy="330.5" r="3" stroke-width="1.2" fill="#fff"/>
<circle cx="203.8" cy="330.5" r="1.2" stroke-width="0.8"/>
<!-- dowel 2 -->
<path fill="#fff" stroke-width="1.1" d="M107,271 L113,269.5 C115,269.5 115.5,273 113.5,273.5 L107.5,275 C105.5,275 105,271.5 107,271 Z"/>
<!-- small bracket plate left -->
<path fill="#fff" stroke-width="1.3" d="M78.1,286.9 L95.5,282.5 L94.5,290.9 L86.5,291.9 L78.1,292.9 Z"/>
<path stroke-width="1.3" d="M78.1,292.9 L89,298.3 L94.5,297.3 L100.4,301.8"/>
<path stroke-width="0.8" d="M95,298.5 C99,301 101,306 103,312"/>
<g stroke-width="0.8"><circle cx="87" cy="288" r="0.9"/><circle cx="88.5" cy="291.5" r="0.7"/></g>
<g stroke-width="0.9"><circle cx="104" cy="281" r="1.3"/><circle cx="108" cy="300" r="1.3"/></g>
<!-- bolts left -->
<g stroke-width="1.1">
 <path d="M46.5,297.8 L57.5,295.3 L57,292.6 L46,295" fill="#fff"/>
 <ellipse cx="43.9" cy="297.3" rx="3.5" ry="4" fill="#fff" stroke-width="1.4"/><ellipse cx="43.9" cy="297.3" rx="1.6" ry="2" stroke-width="0.7"/>
 <ellipse cx="63.7" cy="291.4" rx="3" ry="3.7" fill="#fff"/><path stroke-width="0.7" d="M62.5,290 L63.7,291.4 L65,290 M63.7,291.4 L63.7,293.4"/>
 <ellipse cx="72.5" cy="289.1" rx="3" ry="3.7" fill="#fff"/><path stroke-width="0.7" d="M71.3,287.7 L72.5,289.1 L73.8,287.7 M72.5,289.1 L72.5,291.1"/>
 <path d="M71,323 L79.8,320.8 L79.3,318.2 L70.5,320.4" fill="#fff"/>
 <ellipse cx="68.2" cy="322.6" rx="3.5" ry="4" fill="#fff" stroke-width="1.4"/><ellipse cx="68.2" cy="322.6" rx="1.6" ry="2" stroke-width="0.7"/>
 <ellipse cx="86.5" cy="317.1" rx="3" ry="3.7" fill="#fff"/><path stroke-width="0.7" d="M85.3,315.7 L86.5,317.1 L87.8,315.7 M86.5,317.1 L86.5,319.1"/>
 <ellipse cx="95.5" cy="314.7" rx="3" ry="3.7" fill="#fff"/><path stroke-width="0.7" d="M94.3,313.3 L95.5,314.7 L96.8,313.3 M95.5,314.7 L95.5,316.7"/>
</g>
<!-- washers near lever -->
<g stroke-width="1.1"><circle cx="323" cy="329" r="2.5"/><circle cx="330" cy="328" r="2.5"/></g>
<!-- bolt 3 -->
<path fill="#fff" stroke-width="1.1" d="M231.5,211.5 L246,208.6 L245.5,205.8 L231,208.7 Z"/>
<path stroke-width="0.6" d="M234,208.5 L234.5,211 M237,207.9 L237.5,210.4 M240,207.3 L240.5,209.8"/>
<ellipse cx="228.5" cy="210.6" rx="2.8" ry="3.3" fill="#fff" stroke-width="1.2"/>
<path fill="#fff" stroke-width="1.2" d="M245.5,204.5 L249.5,203.6 L251.5,206.6 L250.5,210.5 L246.5,211.3 L245,208 Z"/>
<!-- ===== C BRACKET ===== -->
<path fill="#fff" stroke-width="1.6" d="M380.9,148.7 L408.2,137.2 L429.8,141.5 L447,162 L451.5,173.2 L451.5,256.8 L398.1,278.4 L388,271.2 L385.2,262.6 L422,250 C426,248.5 427,246 427,243 L427,180.4 C427,176 425,172 422,169 L408.2,158.8 L386.6,163.1 L380.9,158 Z"/>
<g stroke-width="0.9">
 <path d="M380.9,148.7 L385,152 L411,146 L429.8,141.5"/>
 <path d="M385,152 L386.6,163.1 M411,146 L408.2,158.8"/>
 <path d="M411,146 C420,150 429,157 435,166 L438.5,174 L438.5,250 C438.5,254 436,257 432,258.5 L400,270 L398.1,278.4"/>
 <path d="M385.2,262.6 L400,270"/>
 <path d="M436,166 L451.5,173.2"/>
</g>
<path stroke-width="0.7" d="M414.5,150 L414.5,166 M416.5,151 L416.5,167 M418.5,152 L418.5,168"/>
<g stroke-width="1"><circle cx="392.6" cy="155.5" r="1.6"/><circle cx="401.6" cy="152.5" r="1.6"/><circle cx="390.7" cy="266.5" r="1.4"/><circle cx="398.5" cy="272.5" r="1.4"/></g>
<path stroke-width="1.1" fill="#fff" d="M442.8,186 L454.3,186 L454.3,232.3 L442.8,232.3 C440,230 440,226 442,223 C444,220 444,216 442,213 C440,210 440,206 442,203 C444,200 444,196 442,193 C440,191 441,187 442.8,186 Z"/>
<g stroke-width="1"><circle cx="447.5" cy="192.5" r="1.7"/><circle cx="447.5" cy="208.5" r="1.7"/><circle cx="447.5" cy="224.5" r="1.7"/></g>
<path stroke-width="0.8" d="M404,271 C412,268 420,265 428,262 M408,273 L414,271 M418,269 L424,267"/>
<!-- bolt 4 -->
<path stroke-width="3.8" d="M376,219.8 L393,214.5"/>
<path stroke-width="2" stroke="#fff" d="M377,219.4 L392,214.8"/>
<path stroke-width="0.6" d="M380,217.5 L381,219.5 M383,216.6 L384,218.6 M386,215.7 L387,217.7 M389,214.8 L390,216.8"/>
<path stroke-width="1.2" fill="#fff" d="M391.5,211.5 L397.5,209.2 L401.5,212 L401,217 L394.5,219.6 L391,217 Z"/>
<path stroke-width="0.8" d="M397.5,209.2 L396,217 M391.5,211.5 L396,213"/>
<!-- ===== LEADERS ===== -->
<g stroke-width="1.1">
 <path d="M153,168 L160.5,180"/>
 <path d="M191.5,153 L197.5,250"/>
 <path d="M234,160 L242,207"/>
 <path d="M277.5,142 L277.5,147.3 M253.5,155.5 L253.5,147.3 L302,147.3 L302,155.7"/>
 <path d="M259,161 L259.5,182"/>
 <path d="M296,161 L296,171"/>
 <path d="M378,210 L381,216.5"/>
 <path d="M73,274.5 L105,271.5"/>
 <path d="M191.9,338 L191.6,426"/>
 <path d="M202.8,333.5 L212.4,422"/>
 <path d="M205.8,334 L238.2,415"/>
 <path d="M189,465 L189,474"/>
</g>
<!-- ===== BOXES ===== -->
<rect x="155.5" y="450.5" width="80" height="50" stroke-width="1.2" stroke="#222"/>
<rect x="310.5" y="425.5" width="67" height="55" stroke-width="1.2" stroke="#222"/>
<ellipse cx="190.5" cy="482.5" rx="9" ry="8.3" fill="#666" stroke-width="1.8" transform="rotate(20 190.5 482.5)"/>
<ellipse cx="192" cy="482" rx="5.5" ry="6.3" fill="#bbb" stroke-width="0.9" transform="rotate(20 192 482)"/>
<path stroke="#222" stroke-width="0.7" d="M188,478 L195,486 M190,476 L196,482 M187,482 L192,488"/>
<g stroke-width="1.1">
 <path fill="#fff" d="M329,444 L329,459 L332.8,459 L332.8,444"/>
 <path fill="#fff" d="M327.3,438.5 C327.3,436.5 329,436 331,436 C333,436 334.6,436.5 334.6,438.5 L334.6,443 C334.6,444.5 333,445 331,445 C329,445 327.3,444.5 327.3,443 Z"/>
 <path stroke-width="0.8" d="M327.3,440 L334.6,440"/>
 <path d="M329.2,447 L332.6,447 M329.2,450 L332.6,450 M329.2,453 L332.6,453 M329.2,456 L332.6,456" stroke-width="0.7"/>
 <ellipse cx="330.9" cy="461.5" rx="3.6" ry="3" fill="#fff"/>
 <path stroke-width="0.8" d="M329,459 L329,464 M332.8,459 L332.8,464"/>
</g>
<g stroke="#999" stroke-width="0.6"><path d="M383,539 L384,539 M389,536 L390,536 M395,533 L396,533"/></g>
</g>
<!-- ===== LABELS ===== -->
<g font-family="Liberation Sans" font-size="12" text-anchor="middle">
 <rect x="145" y="154" width="9" height="14" fill="#ff0"/><text x="149.5" y="166">1</text>
 <rect x="181" y="139" width="15" height="14" fill="#ff0"/><text x="188.5" y="151">11</text>
 <rect x="228" y="147" width="11" height="13" fill="#ff0"/><text x="233.5" y="158.5">3</text>
 <rect x="272" y="128" width="11" height="14" fill="#00e600"/><text x="277.5" y="140">5</text>
 <rect x="367" y="196" width="12" height="13" fill="#ff0"/><text x="373" y="207.5">4</text>
 <rect x="232" y="211.5" width="17" height="13" fill="#ff0"/><text x="240.5" y="222.5">12</text>
 <rect x="62" y="268" width="11" height="14" fill="#ff0"/><text x="67.5" y="279.5">2</text>
 <rect x="182" y="426" width="11" height="13" fill="#f08080"/><text x="187.5" y="437.5">9</text>
 <rect x="204" y="422" width="17" height="14" fill="#ff0"/><text x="212.5" y="434">10</text>
 <rect x="236" y="415" width="11" height="14" fill="#ff0"/><text x="241.5" y="427">8</text>
 <rect x="180" y="452" width="17" height="13" fill="#ff0"/><text x="188.5" y="462">13</text>
 <text x="259" y="159.5">7</text>
 <text x="296.5" y="159.5">6</text>
</g>
</svg>

<div id="tb"><div id="tbi"></div>
<svg style="position:absolute;left:0;top:0" width="44" height="170"><use href="#i-tools"/></svg>
</div>
</div>
<div id="right">
<div class="row hdr" style="top:1px"><span class="sep" style="left:79px"></span><span class="sep" style="left:135px"></span><span class="sep" style="left:170px"></span><span class="sep" style="left:254px"></span><span class="sep" style="left:289px"></span><span class="sep" style="left:373px"></span><span class="sep" style="left:517px"></span><span class="sep" style="left:573px"></span><span class="sep" style="left:618px"></span><svg class="ic" style="left:27px;top:2px" width="17" height="17"><use href="#i-hdr"/></svg><div style="left:85px">Symbol...</div><div style="left:141px">Item</div><div style="left:176px">Parts No.</div><div style="left:260px">Qty.</div><div style="left:295px">Latest Part No.</div><div style="left:379px">Description</div><div style="left:523px">Cut Out</div><div style="left:579px">Cut In</div><div style="left:624px">Comment</div></div>
<div class="row body yel" style="top:21px"><span class="sep" style="left:79px"></span><span class="sep" style="left:135px"></span><span class="sep" style="left:170px"></span><span class="sep" style="left:254px"></span><span class="sep" style="left:289px"></span><span class="sep" style="left:373px"></span><span class="sep" style="left:517px"></span><span class="sep" style="left:573px"></span><span class="sep" style="left:618px"></span><span class="hl" style="top:19px"></span><svg class="ic" style="left:6px;top:4px" width="10" height="10"><use href="#i-gear"/></svg><svg class="ic" style="left:21px;top:2px" width="17" height="14"><use href="#i-cart"/></svg><svg class="ic" style="left:42px;top:1px" width="11" height="17"><use href="#i-book"/></svg><svg class="ic" style="left:58px;top:2px" width="15" height="15"><use href="#i-info"/></svg><svg class="ic" style="left:83px;top:2px" width="17" height="15"><use href="#i-sym"/></svg><div class="d" style="left:174px">318210</div><div class="d" style="left:258px">13</div><div class="d" style="left:293px">318210</div><div class="c" style="left:377px">SPRING WASHER</div></div>
<div class="row body" style="top:41px"><span class="sep" style="left:79px"></span><span class="sep" style="left:135px"></span><span class="sep" style="left:170px"></span><span class="sep" style="left:254px"></span><span class="sep" style="left:289px"></span><span class="sep" style="left:373px"></span><span class="sep" style="left:517px"></span><span class="sep" style="left:573px"></span><span class="sep" style="left:618px"></span><span class="hl" style="top:19px"></span><svg class="ic" style="left:6px;top:4px" width="10" height="10"><use href="#i-gear"/></svg><svg class="ic" style="left:21px;top:2px" width="17" height="14"><use href="#i-cart"/></svg><svg class="ic" style="left:40px;top:2px" width="15" height="15"><use href="#i-info"/></svg><div class="d" style="left:139px">1</div><div class="p" style="left:174px">6SE258L/1</div><div class="d" style="left:258px">1</div><div class="p" style="left:293px">6SE258L/1</div><div class="c" style="left:377px">FLYWHEEL HOUSING</div></div>
<div class="row body" style="top:61px"><span class="sep" style="left:79px"></span><span class="sep" style="left:135px"></span><span class="sep" style="left:170px"></span><span class="sep" style="left:254px"></span><span class="sep" style="left:289px"></span><span class="sep" style="left:373px"></span><span class="sep" style="left:517px"></span><span class="sep" style="left:573px"></span><span class="sep" style="left:618px"></span><span class="hl" style="top:19px"></span><svg class="ic" style="left:6px;top:4px" width="10" height="10"><use href="#i-gear"/></svg><svg class="ic" style="left:21px;top:2px" width="17" height="14"><use href="#i-cart"/></svg><svg class="ic" style="left:40px;top:2px" width="15" height="15"><use href="#i-s"/></svg><svg class="ic" style="left:58px;top:2px" width="15" height="15"><use href="#i-info"/></svg><svg class="ic" style="left:83px;top:2px" width="17" height="15"><use href="#i-sym"/></svg><div class="d" style="left:139px">1</div><div class="p" style="left:174px">6SE258G/1</div><div class="d" style="left:258px">1</div><div class="p" style="left:293px">6SE258L/1</div><div class="c" style="left:377px">FLYWHEEL HOUSING</div></div>
<div class="row body" style="top:81px"><span class="sep" style="left:79px"></span><span class="sep" style="left:135px"></span><span class="sep" style="left:170px"></span><span class="sep" style="left:254px"></span><span class="sep" style="left:289px"></span><span class="sep" style="left:373px"></span><span class="sep" style="left:517px"></span><span class="sep" style="left:573px"></span><span class="sep" style="left:618px"></span><span class="hl" style="top:19px"></span><svg class="ic" style="left:6px;top:4px" width="10" height="10"><use href="#i-gear"/></svg><svg class="ic" style="left:21px;top:2px" width="17" height="14"><use href="#i-cart"/></svg><svg class="ic" style="left:40px;top:2px" width="15" height="15"><use href="#i-info"/></svg><div class="d" style="left:139px">2</div><div class="d" style="left:174px">340/405</div><div class="d" style="left:258px">2</div><div class="d" style="left:293px">340/405</div><div class="c" style="left:377px">DOWEL</div></div>
<div class="row body" style="top:101px"><span class="sep" style="left:79px"></span><span class="sep" style="left:135px"></span><span class="sep" style="left:170px"></span><span class="sep" style="left:254px"></span><span class="sep" style="left:289px"></span><span class="sep" style="left:373px"></span><span class="sep" style="left:517px"></span><span class="sep" style="left:573px"></span><span class="sep" style="left:618px"></span><span class="hl" style="top:19px"></span><svg class="ic" style="left:6px;top:4px" width="10" height="10"><use href="#i-gear"/></svg><svg class="ic" style="left:21px;top:2px" width="17" height="14"><use href="#i-cart"/></svg><svg class="ic" style="left:40px;top:2px" width="15" height="15"><use href="#i-info"/></svg><div class="d" style="left:139px">3</div><div class="d" style="left:174px">2110/050</div><div class="d" style="left:258px">13</div><div class="d" style="left:293px">2110/050</div><div class="c" style="left:377px">SCREW</div></div>
<div class="row body" style="top:121px"><span class="sep" style="left:79px"></span><span class="sep" style="left:135px"></span><span class="sep" style="left:170px"></span><span class="sep" style="left:254px"></span><span class="sep" style="left:289px"></span><span class="sep" style="left:373px"></span><span class="sep" style="left:517px"></span><span class="sep" style="left:573px"></span><span class="sep" style="left:618px"></span><span class="hl" style="top:19px"></span><svg class="ic" style="left:6px;top:4px" width="10" height="10"><use href="#i-gear"/></svg><svg class="ic" style="left:21px;top:2px" width="17" height="14"><use href="#i-cart"/></svg><svg class="ic" style="left:40px;top:2px" width="15" height="15"><use href="#i-info"/></svg><svg class="ic" style="left:83px;top:2px" width="17" height="15"><use href="#i-sym"/></svg><div class="d" style="left:139px">3</div><div class="d" style="left:174px">310063</div><div class="d" style="left:258px">13</div><div class="d" style="left:293px">310063</div><div class="c" style="left:377px">BOLT</div></div>
<div class="row body" style="top:141px"><span class="sep" style="left:79px"></span><span class="sep" style="left:135px"></span><span class="sep" style="left:170px"></span><span class="sep" style="left:254px"></span><span class="sep" style="left:289px"></span><span class="sep" style="left:373px"></span><span class="sep" style="left:517px"></span><span class="sep" style="left:573px"></span><span class="sep" style="left:618px"></span><span class="hl" style="top:19px"></span><svg class="ic" style="left:6px;top:4px" width="10" height="10"><use href="#i-gear"/></svg><svg class="ic" style="left:21px;top:2px" width="17" height="14"><use href="#i-cart"/></svg><svg class="ic" style="left:40px;top:2px" width="15" height="15"><use href="#i-info"/></svg><div class="d" style="left:139px">4</div><div class="d" style="left:174px">2116/060</div><div class="d" style="left:258px">5</div><div class="d" style="left:293px">2116/060</div><div class="c" style="left:377px">BOLT</div></div>
<div class="row body" style="top:161px"><span class="sep" style="left:79px"></span><span class="sep" style="left:135px"></span><span class="sep" style="left:170px"></span><span class="sep" style="left:254px"></span><span class="sep" style="left:289px"></span><span class="sep" style="left:373px"></span><span class="sep" style="left:517px"></span><span class="sep" style="left:573px"></span><span class="sep" style="left:618px"></span><span class="hl" style="top:19px"></span><svg class="ic" style="left:4px;top:2px" width="16" height="16"><use href="#i-gears"/></svg><svg class="ic" style="left:21px;top:2px" width="17" height="14"><use href="#i-cart"/></svg><svg class="ic" style="left:40px;top:2px" width="15" height="15"><use href="#i-info"/></svg><div class="d" style="left:139px">5</div><div class="p" style="left:174px">8SE251A</div><div class="d" style="left:258px">1</div><div class="p" style="left:293px">8SE251A</div><div class="c" style="left:377px">FLYWHEEL ASSEMBLY</div></div>
<div class="row body" style="top:181px"><span class="sep" style="left:79px"></span><span class="sep" style="left:135px"></span><span class="sep" style="left:170px"></span><span class="sep" style="left:254px"></span><span class="sep" style="left:289px"></span><span class="sep" style="left:373px"></span><span class="sep" style="left:517px"></span><span class="sep" style="left:573px"></span><span class="sep" style="left:618px"></span><span class="hl" style="top:19px"></span><svg class="ic" style="left:6px;top:4px" width="10" height="10"><use href="#i-gear"/></svg><svg class="ic" style="left:21px;top:2px" width="17" height="14"><use href="#i-cart"/></svg><svg class="ic" style="left:40px;top:2px" width="15" height="15"><use href="#i-info"/></svg><div class="d" style="left:139px">8</div><div class="d" style="left:174px">334/246</div><div class="d" style="left:258px">1</div><div class="d" style="left:293px">334/246</div><div class="c" style="left:377px">PLATE</div></div>
<div class="row body sel" style="top:201px"><span class="sep" style="left:79px"></span><span class="sep" style="left:135px"></span><span class="sep" style="left:170px"></span><span class="sep" style="left:254px"></span><span class="sep" style="left:289px"></span><span class="sep" style="left:373px"></span><span class="sep" style="left:517px"></span><span class="sep" style="left:573px"></span><span class="sep" style="left:618px"></span><span class="hl" style="top:19px"></span><svg class="ic" style="left:6px;top:4px" width="10" height="10"><use href="#i-gear"/></svg><svg class="ic" style="left:21px;top:2px" width="17" height="14"><use href="#i-carts"/></svg><svg class="ic" style="left:40px;top:2px" width="15" height="15"><use href="#i-info"/></svg><div class="d" style="left:139px">9</div><div class="d" style="left:174px">312098</div><div class="d" style="left:258px">3</div><div class="d" style="left:293px">312098</div><div class="c" style="left:377px">SCREW</div></div>
<div class="row body" style="top:221px"><span class="sep" style="left:79px"></span><span class="sep" style="left:135px"></span><span class="sep" style="left:170px"></span><span class="sep" style="left:254px"></span><span class="sep" style="left:289px"></span><span class="sep" style="left:373px"></span><span class="sep" style="left:517px"></span><span class="sep" style="left:573px"></span><span class="sep" style="left:618px"></span><span class="hl" style="top:19px"></span><svg class="ic" style="left:6px;top:4px" width="10" height="10"><use href="#i-gear"/></svg><svg class="ic" style="left:21px;top:2px" width="17" height="14"><use href="#i-cart"/></svg><svg class="ic" style="left:40px;top:2px" width="15" height="15"><use href="#i-info"/></svg><svg class="ic" style="left:83px;top:2px" width="17" height="15"><use href="#i-sym"/></svg><div class="d" style="left:139px">9</div><div class="p" style="left:174px">UFS110/6S</div><div class="d" style="left:258px">3</div><div class="p" style="left:293px">UFS110/6S</div><div class="c" style="left:377px">UNF BOLT</div></div>
<div class="row body" style="top:241px"><span class="sep" style="left:79px"></span><span class="sep" style="left:135px"></span><span class="sep" style="left:170px"></span><span class="sep" style="left:254px"></span><span class="sep" style="left:289px"></span><span class="sep" style="left:373px"></span><span class="sep" style="left:517px"></span><span class="sep" style="left:573px"></span><span class="sep" style="left:618px"></span><span class="hl" style="top:19px"></span><svg class="ic" style="left:6px;top:4px" width="10" height="10"><use href="#i-gear"/></svg><svg class="ic" style="left:21px;top:2px" width="17" height="14"><use href="#i-cart"/></svg><svg class="ic" style="left:40px;top:2px" width="15" height="15"><use href="#i-info"/></svg><svg class="ic" style="left:83px;top:2px" width="17" height="15"><use href="#i-sym"/></svg><div class="d" style="left:139px">9</div><div class="p" style="left:174px">UFS110/8S</div><div class="d" style="left:258px">3</div><div class="p" style="left:293px">UFS110/8S</div><div class="c" style="left:377px">UNF BOLT</div></div>
<div class="row body" style="top:261px"><span class="sep" style="left:79px"></span><span class="sep" style="left:135px"></span><span class="sep" style="left:170px"></span><span class="sep" style="left:254px"></span><span class="sep" style="left:289px"></span><span class="sep" style="left:373px"></span><span class="sep" style="left:517px"></span><span class="sep" style="left:573px"></span><span class="sep" style="left:618px"></span><span class="hl" style="top:19px"></span><svg class="ic" style="left:6px;top:4px" width="10" height="10"><use href="#i-gear"/></svg><svg class="ic" style="left:21px;top:2px" width="17" height="14"><use href="#i-cart"/></svg><svg class="ic" style="left:40px;top:2px" width="15" height="15"><use href="#i-info"/></svg><div class="d" style="left:139px">10</div><div class="d" style="left:174px">318213</div><div class="d" style="left:258px">3</div><div class="d" style="left:293px">318213</div><div class="c" style="left:377px">SPRING WASHER</div></div>
<div class="row body" style="top:281px"><span class="sep" style="left:79px"></span><span class="sep" style="left:135px"></span><span class="sep" style="left:170px"></span><span class="sep" style="left:254px"></span><span class="sep" style="left:289px"></span><span class="sep" style="left:373px"></span><span class="sep" style="left:517px"></span><span class="sep" style="left:573px"></span><span class="sep" style="left:618px"></span><span class="hl" style="top:19px"></span><svg class="ic" style="left:6px;top:4px" width="10" height="10"><use href="#i-gear"/></svg><svg class="ic" style="left:21px;top:2px" width="17" height="14"><use href="#i-cart"/></svg><svg class="ic" style="left:40px;top:2px" width="15" height="15"><use href="#i-info"/></svg><div class="d" style="left:139px">11</div><div class="d" style="left:174px">55/75</div><div class="d" style="left:258px">1</div><div class="d" style="left:293px">55/75</div><div class="c" style="left:377px">POINTER</div></div>
<div class="row body" style="top:301px"><span class="sep" style="left:79px"></span><span class="sep" style="left:135px"></span><span class="sep" style="left:170px"></span><span class="sep" style="left:254px"></span><span class="sep" style="left:289px"></span><span class="sep" style="left:373px"></span><span class="sep" style="left:517px"></span><span class="sep" style="left:573px"></span><span class="sep" style="left:618px"></span><span class="hl" style="top:19px"></span><svg class="ic" style="left:6px;top:4px" width="10" height="10"><use href="#i-gear"/></svg><svg class="ic" style="left:21px;top:2px" width="17" height="14"><use href="#i-cart"/></svg><svg class="ic" style="left:40px;top:2px" width="15" height="15"><use href="#i-info"/></svg><div class="d" style="left:139px">12</div><div class="d" style="left:174px">471/54</div><div class="d" style="left:258px">1</div><div class="d" style="left:293px">471/54</div><div class="c" style="left:377px">PLUG</div></div>
<div class="row body" style="top:321px"><span class="sep" style="left:79px"></span><span class="sep" style="left:135px"></span><span class="sep" style="left:170px"></span><span class="sep" style="left:254px"></span><span class="sep" style="left:289px"></span><span class="sep" style="left:373px"></span><span class="sep" style="left:517px"></span><span class="sep" style="left:573px"></span><span class="sep" style="left:618px"></span><span class="hl" style="top:19px"></span><svg class="ic" style="left:6px;top:4px" width="10" height="10"><use href="#i-gear"/></svg><svg class="ic" style="left:21px;top:2px" width="17" height="14"><use href="#i-cart"/></svg><svg class="ic" style="left:40px;top:2px" width="15" height="15"><use href="#i-info"/></svg><div class="d" style="left:139px">13</div><div class="d" style="left:174px">471/41</div><div class="d" style="left:258px">1</div><div class="d" style="left:293px">471/41</div><div class="c" style="left:377px">PLUG</div></div>
<svg style="position:absolute;left:636px;top:486px" width="40" height="49"><use href="#i-logo"/></svg>
</div>
</body></html>
